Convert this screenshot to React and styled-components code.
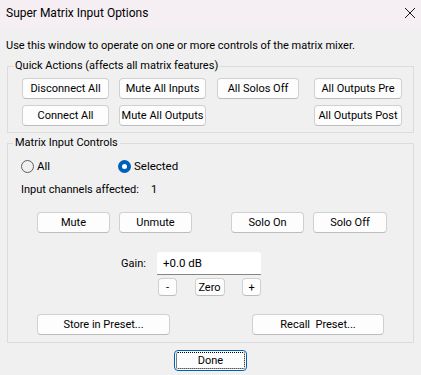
import styled, { createGlobalStyle } from 'styled-components';

const GlobalStyle = createGlobalStyle`
	html, body {
		margin: 0;
		padding: 0;
		background: #f0f0f0;
	}
	body {
		font-family: Roboto, "Liberation Sans", sans-serif;
		font-size: 11px;
		color: #000;
	}
`;

const Window = styled.div`
	width: 421px;
	height: 375px;
	background: #f0f0f0;
	display: flex;
	flex-direction: column;
	overflow: hidden;
`;

const TitleBar = styled.div`
	height: 30px;
	flex: none;
	display: flex;
	align-items: flex-start;
	justify-content: space-between;
	padding: 0 5px 0 6px;
	background: #f5eef3;
	box-sizing: border-box;
`;

const Title = styled.div`
	font-size: 12px;
	line-height: 16px;
	margin-top: 5px;
`;

const CloseIcon = () => (
	<svg width="12" height="12" viewBox="0 0 12 12" style={{ marginTop: 7 }}>
		<path d="M1 1 L11 11 M11 1 L1 11" stroke="#1a1a1a" strokeWidth="1" fill="none" />
	</svg>
);

const Body = styled.div`
	padding: 0 7px;
	display: flex;
	flex-direction: column;
`;

const Description = styled.div`
	line-height: 16px;
	margin: 8px 0 4px -1px;
	white-space: nowrap;
`;

const Group = styled.fieldset`
	margin: 0;
	padding: 0 0 ${(p) => p.$bottom || 6}px 0;
	border: 1px solid #dcdcdc;
	min-width: 0;
	& + & {
		margin-top: 2px;
	}
`;

const Legend = styled.legend`
	margin-left: 5px;
	padding: 0 2px;
	line-height: 16px;
	white-space: nowrap;
`;

const QuickGrid = styled.div`
	display: grid;
	grid-template-columns: 97px 98px 97px 88px;
	grid-auto-rows: 21px;
	row-gap: 6px;
	padding: 4px 0 0 14px;
`;

const Button = styled.button`
	box-sizing: border-box;
	width: ${(p) => p.$w}px;
	height: ${(p) => p.$h || 21}px;
	padding: 0;
	font: inherit;
	line-height: 1;
	color: #000;
	background: #fdfdfd;
	border: 1px solid #d0d0d0;
	border-bottom-color: #bcbcbc;
	border-radius: 4px;
	white-space: nowrap;
	grid-column: ${(p) => p.$col || 'auto'};
	justify-self: start;
`;

const DoneButton = styled(Button)`
	border: 1px solid #005fb8;
	position: relative;
	&::after {
		content: '';
		position: absolute;
		inset: 1px;
		border: 1px dotted #000;
		border-radius: 2px;
	}
`;

const RadioRow = styled.div`
	display: flex;
	padding: 7px 0 0 13px;
	line-height: 16px;
`;

const RadioItem = styled.label`
	display: flex;
	align-items: center;
	gap: 3px;
	width: ${(p) => p.$w}px;
	font-size: 11.5px;
`;

const RadioCircle = styled.span`
	box-sizing: border-box;
	width: 13px;
	height: 13px;
	border-radius: 50%;
	border: ${(p) => (p.$checked ? '4px solid #005fb8' : '1px solid #5d5d5d')};
	background: ${(p) => (p.$checked ? '#fff' : 'transparent')};
`;

const InfoLine = styled.div`
	display: flex;
	line-height: 16px;
	margin-top: 8px;
	padding-left: 13px;
	white-space: nowrap;
`;

const InfoLabel = styled.span`
	flex: none;
	width: 130px;
`;

const ButtonRow = styled.div`
	display: flex;
	gap: ${(p) => p.$gap}px;
	padding-left: 29px;
	margin-top: ${(p) => p.$top}px;
`;

const Pair = styled.div`
	display: flex;
	gap: 9px;
`;

const GainBlock = styled.div`
	display: flex;
	margin-top: 19px;
	padding-left: 113px;
`;

const GainLabel = styled.div`
	width: 36px;
	line-height: 23px;
`;

const GainColumn = styled.div`
	display: flex;
	flex-direction: column;
	width: 104px;
`;

const GainInput = styled.div`
	box-sizing: border-box;
	height: 23px;
	background: #fff;
	border-radius: 3px 3px 0 0;
	border-bottom: 1px solid #868686;
	padding: 0 6px;
	line-height: 22px;
	font-size: 11.5px;
`;

const StepRow = styled.div`
	display: flex;
	justify-content: space-between;
	margin: 3px 0 0 1px;
`;

const Footer = styled.div`
	display: flex;
	justify-content: center;
	margin-top: 7px;
`;

export default function App() {
	return (
		<>
			<GlobalStyle />
			<Window>
				<TitleBar>
					<Title>Super Matrix Input Options</Title>
					<CloseIcon />
				</TitleBar>
				<Body>
					<Description>Use this window to operate on one or more controls of the matrix mixer.</Description>
					<Group>
						<Legend>Quick Actions (affects all matrix features)</Legend>
						<QuickGrid>
							<Button $w={87}>Disconnect All</Button>
							<Button $w={87}>Mute All Inputs</Button>
							<Button $w={82}>All Solos Off</Button>
							<Button $w={88}>All Outputs Pre</Button>
							<Button $w={87}>Connect All</Button>
							<Button $w={87}>Mute All Outputs</Button>
							<Button $w={88} $col={4}>All Outputs Post</Button>
						</QuickGrid>
					</Group>
					<Group $bottom={7}>
						<Legend>Matrix Input Controls</Legend>
						<RadioRow>
							<RadioItem $w={97}>
								<RadioCircle />
								All
							</RadioItem>
							<RadioItem>
								<RadioCircle $checked />
								Selected
							</RadioItem>
						</RadioRow>
						<InfoLine>
							<InfoLabel>Input channels affected:</InfoLabel>
							<span>1</span>
						</InfoLine>
						<ButtonRow $gap={39} $top={14}>
							<Pair>
								<Button $w={73}>Mute</Button>
								<Button $w={73}>Unmute</Button>
							</Pair>
							<Pair>
								<Button $w={73}>Solo On</Button>
								<Button $w={74}>Solo Off</Button>
							</Pair>
						</ButtonRow>
						<GainBlock>
							<GainLabel>Gain:</GainLabel>
							<GainColumn>
								<GainInput>+0.0 dB</GainInput>
								<StepRow>
									<Button $w={19} $h={18}>-</Button>
									<Button $w={30} $h={18}>Zero</Button>
									<Button $w={19} $h={18}>+</Button>
								</StepRow>
							</GainColumn>
						</GainBlock>
						<ButtonRow $gap={82} $top={18}>
							<Button $w={133}>Store in Preset...</Button>
							<Button $w={132}>Recall&nbsp; Preset...</Button>
						</ButtonRow>
					</Group>
					<Footer>
						<DoneButton $w={73}>Done</DoneButton>
					</Footer>
				</Body>
			</Window>
		</>
	);
}
